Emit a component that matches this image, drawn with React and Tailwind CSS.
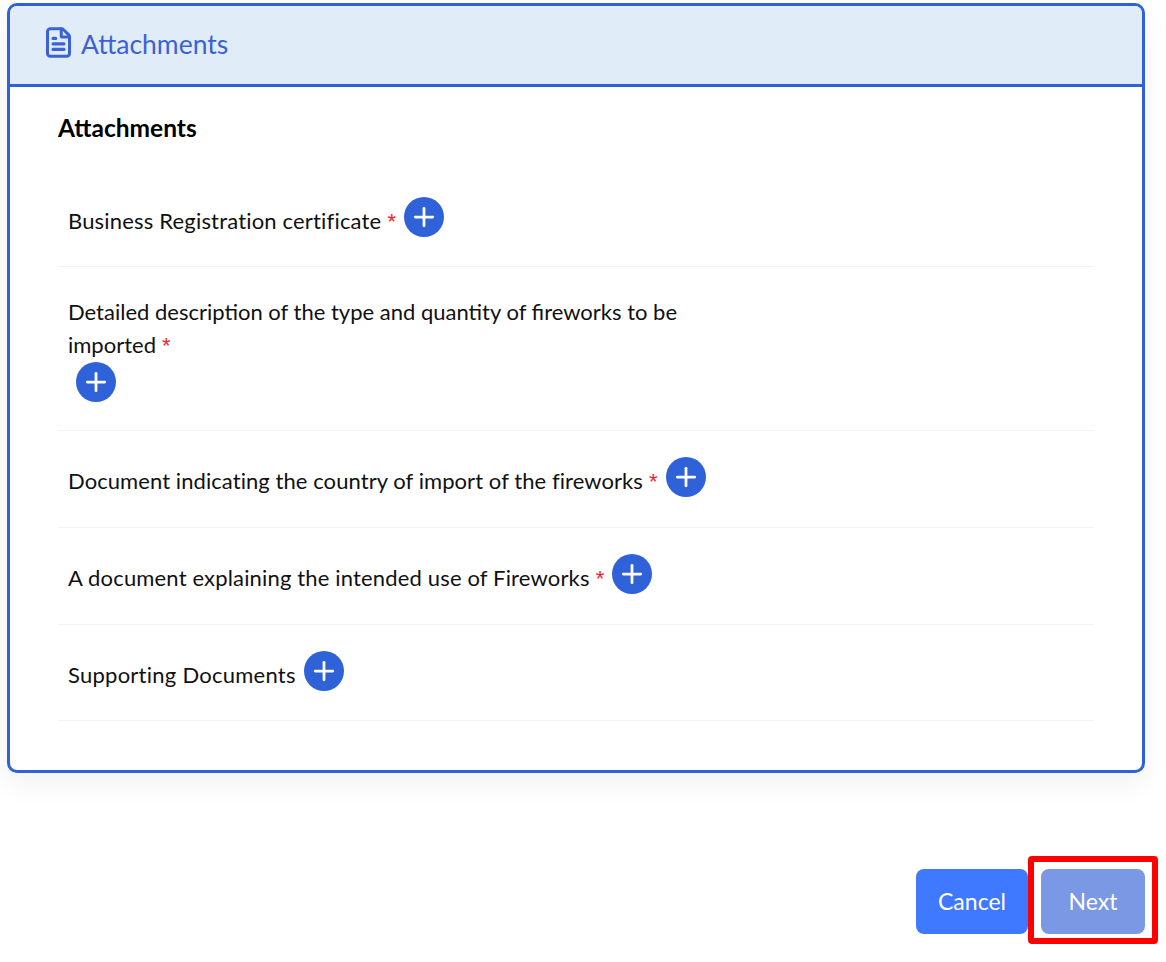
import React from 'react';
import { FileText, Plus } from 'lucide-react';

const font = "font-['Lato','Noto_Sans',sans-serif]";

const AddButton = ({ className = '' }) => (
  <button className={`flex h-10 w-10 shrink-0 items-center justify-center rounded-full bg-[#2f62d9] text-white ${className}`}>
    <Plus size={30} strokeWidth={2.2} />
  </button>
);

const Star = () => <span className="ml-[6px] font-['Liberation_Sans',sans-serif] text-[#f5222d]">*</span>;

const Row = ({ label, required, height, tracking = '' }) => (
  <div className={`flex items-center border-b border-[#f3f3f3] pl-[10px] ${height}`}>
    <span className={`mt-1 text-[22px] leading-[33px] text-[#111] ${tracking}`}>
      {label}
      {required && <Star />}
    </span>
    <AddButton className="mb-1 ml-2" />
  </div>
);

export default function App() {
  return (
    <div className={`relative h-[962px] w-[1166px] overflow-hidden bg-white pl-[7px] pt-[3px] ${font}`}>
      {/* Card */}
      <div className="h-[770px] w-[1138px] overflow-hidden rounded-[10px] border-[3px] border-[#2f62d9] shadow-[0_10px_30px_rgba(0,0,0,0.06)]">
        <div className="flex h-[81px] items-center gap-[6px] border-b-[3px] border-[#2f62d9] bg-[#e1ecf9] pl-[32px] text-[#3a62d6]">
          <FileText size={33} strokeWidth={2.2} className="mb-1.5" />
          <span className="text-[26.5px]">Attachments</span>
        </div>

        <div className="px-[48px]">
          <h3 className="mt-[24px] text-[24.5px] font-bold leading-[33px] text-black">Attachments</h3>

          <div className="mt-[28px]">
            <Row label="Business Registration certificate" required height="h-[95px]" tracking="tracking-[0.18px]" />

            <div className="h-[164px] border-b border-[#f3f3f3] pl-[10px] pt-[28px]">
              <p className="w-[650px] text-[22px] leading-[33px] text-[#111]">
                Detailed description of the type and quantity of fireworks to be imported
                <Star />
              </p>
              <AddButton className="ml-2" />
            </div>

            <Row label="Document indicating the country of import of the fireworks" required height="h-[97px]" tracking="tracking-[0.07px]" />
            <Row label="A document explaining the intended use of Fireworks" required height="h-[97px]" tracking="tracking-[0.16px]" />
            <Row label="Supporting Documents" height="h-[96px]" tracking="tracking-[0.25px]" />
          </div>
        </div>
      </div>

      {/* Footer buttons */}
      <div className="mt-[96px] flex w-[1138px] justify-end">
        <button className="mr-[13px] h-[65px] w-[112px] rounded-lg bg-[#3f79ff] text-[23px] text-white">Cancel</button>
        <button className="h-[65px] w-[104px] rounded-lg bg-[#7a98e3] text-[23px] text-white">Next</button>
      </div>

      {/* Red highlight over the Next button */}
      <div className="absolute left-[1028px] top-[856px] h-[88px] w-[130px] rounded-sm border-[6px] border-[#ff0000]" />
    </div>
  );
}
